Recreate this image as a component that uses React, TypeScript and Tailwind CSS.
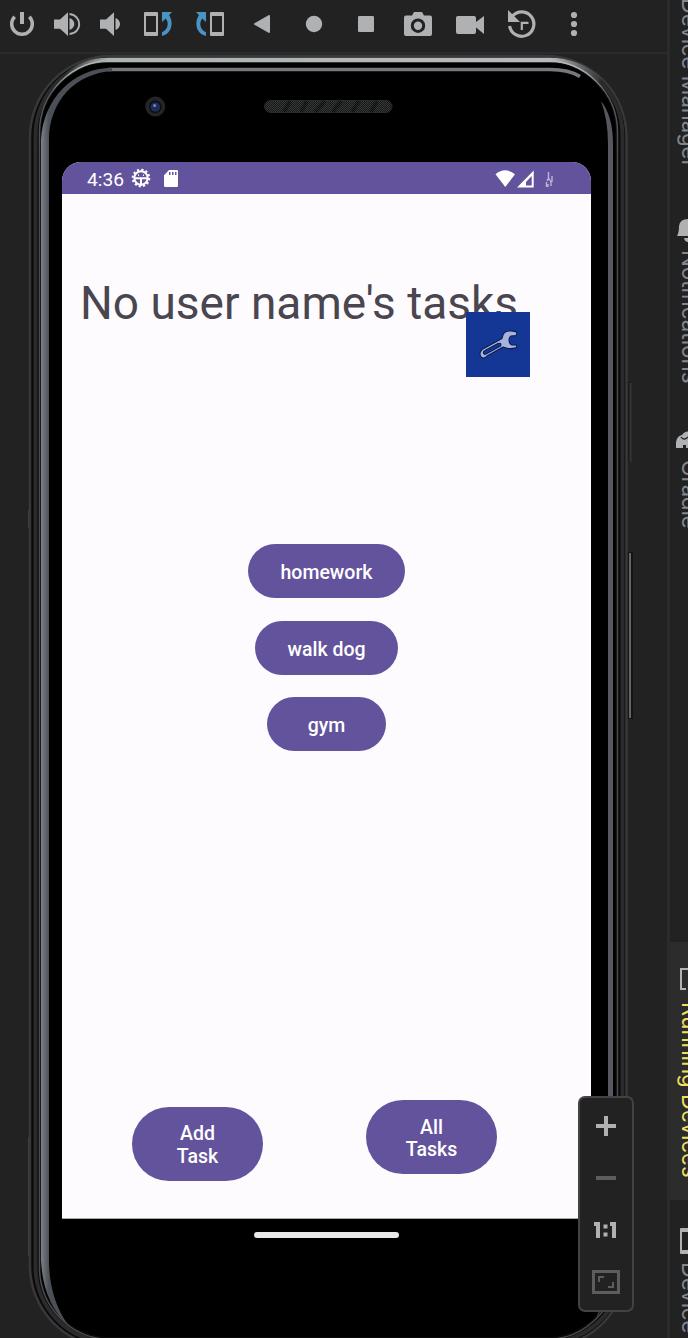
import type { ReactNode } from "react";

function ToolIcon({ label, wide, children }: { label: string; wide?: boolean; children: ReactNode }) {
  return (
    <button aria-label={label} className={wide ? "flex h-12 w-[52px] items-center justify-center" : "flex h-12 w-11 items-center justify-center"}>
      <svg width="32" height="32" viewBox="-16 -16 32 32" fill="#afb1b3">{children}</svg>
    </button>
  );
}

function RotateGlyph() {
  return (
    <>
      <path fillRule="evenodd" d="M-13-12H-1Q0-12 0-11V11Q0 12-1 12H-13Q-14 12-14 11V-11Q-14-12-13-12ZM-12-8V8H-2V-8Z" />
      <path d="M4-12H14L11-8.8C15-4 15.500 9 4 12V8.300C10.500 5 11-1 7.800-5.500L4-2Z" fill="#4a93c5" />
    </>
  );
}

function Toolbar() {
  return (
    <header className="flex h-[54px] shrink-0 border-b-2 border-[#2b2b2b]">
      <ToolIcon label="Power">
        <path d="M-7.300-8A10.300 10.300 0 1 0 7.300-8" transform="translate(0 .7)" fill="none" stroke="#afb1b3" strokeWidth="3.500" />
        <path d="M-2-12H2V0H-2Z" />
      </ToolIcon>
      <ToolIcon label="Volume up">
        <path d="M-12-4.500H-6L2-11.800V12L-6 4.700H-12ZM3.500-6C10-4 10 4 3.500 6Z" />
        <path d="M3.500-10C16.500-8.500 16.500 8.800 3.500 10" fill="none" stroke="#afb1b3" strokeWidth="1.900" />
      </ToolIcon>
      <ToolIcon label="Volume down">
        <path d="M-10-4.500H-4L4-11.800V12L-4 4.700H-10ZM5.500-6C11.500-3.800 11.500 3.800 5.500 6Z" />
      </ToolIcon>
      <ToolIcon wide label="Rotate left"><RotateGlyph /></ToolIcon>
      <ToolIcon wide label="Rotate right"><g transform="scale(-1 1)"><RotateGlyph /></g></ToolIcon>
      <ToolIcon wide label="Back"><path d="M-7.500-.8L6.500-8.800Q8-9.300 8-7.800V7.800Q8 9.300 6.500 8.800L-7.500.8Q-8.600 0-7.500-.8Z" /></ToolIcon>
      <ToolIcon wide label="Home"><circle r="8.200" /></ToolIcon>
      <ToolIcon wide label="Overview"><rect x="-8" y="-8" width="16" height="16" rx="1.200" /></ToolIcon>
      <ToolIcon wide label="Screenshot">
        <path d="M-12-8.500H-6L-4-12H4L6-8.500H12Q14-8.500 14-6.500V10Q14 12 12 12H-12Q-14 12-14 10V-6.500Q-14-8.500-12-8.500Z" />
        <circle cy="1.700" r="5.700" fill="none" stroke="#222222" strokeWidth="3" />
      </ToolIcon>
      <ToolIcon wide label="Record">
        <path d="M-12-8H4Q6-8 6-6V-2L14-8V10L6 3.500V8Q6 10 4 10H-12Q-14 10-14 8V-6Q-14-8-12-8Z" />
      </ToolIcon>
      <ToolIcon wide label="Snapshots">
        <path d="M-9.500-8A12.200 12.200 0 1 1-12.400 2" fill="none" stroke="#afb1b3" strokeWidth="3.200" />
        <path d="M-14-14V-2H-2Z" />
        <path d="M-.2 6V-1.200H6.500" fill="none" stroke="#afb1b3" strokeWidth="2.200" />
      </ToolIcon>
      <ToolIcon wide label="More"><circle cy="-9" r="3.100" /><circle r="3.100" /><circle cy="9" r="3.100" /></ToolIcon>
    </header>
  );
}

function DeviceFrame() {
  return (
    <svg className="absolute left-0 top-0" width="667" height="1284" viewBox="0 54 667 1284" fill="none">
      <defs>
        <linearGradient id="rim" x1="0" y1="55" x2="0" y2="150" gradientUnits="userSpaceOnUse">
          <stop offset="0" stopColor="#b9bdbe" />
          <stop offset=".18" stopColor="#a7abad" />
          <stop offset=".4" stopColor="#55585a" />
          <stop offset="1" stopColor="#4b4b4e" />
        </linearGradient>
        <linearGradient id="topRim" x1="65" y1="0" x2="605" y2="0" gradientUnits="userSpaceOnUse">
          <stop offset="0" stopColor="#aeb2b3" stopOpacity="0" />
          <stop offset=".08" stopColor="#aeb2b3" />
          <stop offset=".9" stopColor="#b8b9bc" />
          <stop offset="1" stopColor="#aeb2b3" stopOpacity="0" />
        </linearGradient>
        <linearGradient id="edge" x1="41" y1="0" x2="49" y2="0" gradientUnits="userSpaceOnUse">
          <stop offset="0" stopColor="#7c8187" />
          <stop offset="1" stopColor="#4b4f56" />
        </linearGradient>
        <pattern id="mesh" width="2" height="2" patternUnits="userSpaceOnUse">
          <path d="M0 0H1V1H0ZM1 1H2V2H1Z" fill="#373a39" />
        </pattern>
      </defs>
      <path d="M628 382H631V462H628Z" fill="#191919" />
      <path d="M630.500 383V462" stroke="#353535" strokeWidth="2" />
      <path d="M627 552H633V719H627Z" fill="#141414" />
      <path d="M630 553V718" stroke="#656565" strokeWidth="2" />
      <path d="M28.500 510V528M28.500 1137V1256" stroke="#3c4048" />
      <rect x="30" y="56" width="596.500" height="1291" rx="81" fill="#0a0a0a" stroke="#38383a" strokeWidth="2.500" />
      <rect x="35.500" y="59.500" width="587" height="1283" rx="76" stroke="#2b2b2b" strokeWidth="4" />
      <rect x="39.500" y="60.500" width="578" height="1279" rx="72" stroke="url(#rim)" strokeWidth="1.500" />
      <path d="M67 75Q83 60 108 60H550Q578 60 600 80" stroke="url(#topRim)" strokeWidth="4.500" />
      <rect x="41" y="63" width="574.500" height="1274" rx="69" fill="#000" />
      <path d="M108 69.500H550Q569 69.500 580 76.500" stroke="#77777e" strokeWidth="3.500" />
      <path d="M41 140C43 99 73 68 112 67.700V71.300C76 73 49 101 49 140V1260Q49 1298 68 1325Q43 1303 41 1260Z" fill="url(#edge)" />
      <path d="M601 101Q613 116 613 144V1260Q612 1296 596 1318Q608 1295 608 1260V144Q608 120 601 101Z" fill="#56575f" />
      <circle cx="155.300" cy="106.500" r="10" fill="#242527" />
      <circle cx="155.300" cy="106.800" r="6.300" fill="#0b0c15" />
      <circle cx="155.300" cy="107" r="4.800" fill="#202c58" />
      <circle cx="154.600" cy="105.500" r="1.600" fill="#7581ad" />
      <rect x="264.500" y="100.500" width="127.500" height="12" rx="6" fill="#151716" stroke="#292c2b" />
      <rect x="265" y="101" width="126" height="11" rx="5.500" fill="url(#mesh)" />
      <path d="M284 112L290 101M301 112L307 101M315 112L325 101M333 112L341 101M352 112L359 101M371 112L377 101" stroke="#0b0d0c" strokeOpacity=".5" strokeWidth="4" />
    </svg>
  );
}

function StatusBar() {
  return (
    <div className="flex h-8 items-center rounded-t-[19px] bg-[#63539c] text-white">
      <span className="ml-[25px] mt-[3px] w-[36px] whitespace-nowrap text-[19.200px] leading-none">4:36</span>
      <svg className="ml-[8px]" width="20" height="20" viewBox="-10 -10 20 20" fill="none" stroke="#fff">
        <circle r="6.700" strokeWidth="2" />
        <circle r="8.300" strokeWidth="2" strokeDasharray="2.200 2.146" />
        <path d="M-6.500.2H6.500M0 0V8" strokeWidth="2" />
        <path d="M-3-2.800H-2M2-2.800H3" strokeWidth="1.500" />
      </svg>
      <svg className="ml-[13px]" width="14" height="17" viewBox="0 0 14 17">
        <path fill="#fff" fillRule="evenodd" d="M5 0H12.800Q14 0 14 1.200V15.800Q14 17 12.800 17H1.200Q0 17 0 15.800V5.200ZM5 2V5H6.500V2ZM8 2V5H9.500V2ZM11 2V5H12.500V2Z" />
      </svg>
      <svg className="ml-auto mr-[36px] mt-px" width="60" height="18" viewBox="0 0 60 18" fill="#fff">
        <path d="M.500 4.200Q10-3.500 20 4.200L10.300 17Z" />
        <path fillRule="evenodd" d="M38.700.500V17.500H22ZM36.700 6V15.500H31V12Z" />
        <path d="M53.500 2V8L56 12V16M53.500 8L52 11M51.500 12V17M57 6V12M53 14V17" fill="none" stroke="#bcb3da" strokeWidth="1.400" />
      </svg>
    </div>
  );
}

const pill = "flex items-center justify-center rounded-full bg-[#63539c] text-center text-[19.500px] font-medium text-white";

function AppScreen() {
  return (
    <section className="relative ml-[62px] mt-[108px] flex h-[1057px] w-[529px] flex-col rounded-t-[19px] border-b border-[#aaa8ad] bg-[#fefbff] font-[Roboto,sans-serif]">
      <StatusBar />
      <div className="relative mt-[80px] h-[58px]">
        <h1 className="ml-[18px] whitespace-nowrap text-[46px] leading-[58px] text-[#49464f]">No user name&apos;s tasks</h1>
        <button aria-label="Settings" className="absolute left-[404px] top-[38px] h-[65px] w-[64px] bg-[#143694]">
          <svg width="64" height="65" viewBox="0 0 64 65">
            <path fillRule="evenodd" d="M16 37.500L36 26.500Q37 19 43 19Q51 18.500 51 21.500L50 23.500L45 24Q43 25 43 28Q43 32 46 33H50L51 35Q49 37 42 36.500L37 35L21 44Q18 47.500 15 45Q12.500 41 16 37.500ZM17.500 41Q18 43 20 42L34.500 34Q36 30.500 32 31.500L19 38.500Q17 39.500 17.500 41Z" fill="#a6b3da" stroke="#0b1e52" strokeWidth="1.100" strokeLinejoin="round" />
          </svg>
        </button>
      </div>
      <div className="mt-[212px] flex flex-col items-center">
        <button className={`${pill} h-[54px] w-[157px] pt-[3px]`}>homework</button>
        <button className={`${pill} mt-[23px] h-[54px] w-[143px] pt-[3px]`}>walk dog</button>
        <button className={`${pill} mt-[22px] h-[54px] w-[119px] pt-[3px]`}>gym</button>
      </div>
      <div className="mt-[349px] flex items-start justify-between pl-[70px] pr-[94px]">
        <button className={`${pill} mt-[7px] h-[74px] w-[131px] pt-[3px] leading-[22.500px]`}>Add<br />Task</button>
        <button className={`${pill} h-[74px] w-[131px] pt-[4px] leading-[22.500px]`}>All<br />Tasks</button>
      </div>
    </section>
  );
}

function ZoomPanel() {
  return (
    <aside className="absolute left-[578px] top-[1096px] flex h-[216px] w-14 flex-col items-center rounded-[7px] border-2 border-[#434343] bg-[#222222] pt-0.5">
      <button aria-label="Zoom in" className="flex h-[52px] items-center">
        <svg width="20" height="20"><path d="M8 0H12V8H20V12H12V20H8V12H0V8H8Z" fill="#afb1b3" /></svg>
      </button>
      <button aria-label="Zoom out" className="flex h-[52px] items-center">
        <svg width="20" height="4"><path d="M0 0H20V4H0Z" fill="#5c5d5e" /></svg>
      </button>
      <button aria-label="Actual size" className="flex h-[52px] items-center">
        <svg width="24" height="16" fill="#afb1b3"><path d="M0 0H6V16H2V4H0ZM16 0H22V16H18V4H16ZM9.500 2.500H13.500V6.500H9.500ZM9.500 10.500H13.500V14.500H9.500Z" /></svg>
      </button>
      <button aria-label="Fit to window" className="flex h-[52px] items-center">
        <svg width="28" height="24" fill="none" stroke="#5c5d5e"><path d="M1.500 1.500H26.500V22.500H1.500Z" strokeWidth="3" /><path d="M7 12V7H12M21 12V17H16" strokeWidth="2" /></svg>
      </button>
    </aside>
  );
}

const sideLabel = "block w-7 whitespace-nowrap leading-[28px] [writing-mode:vertical-rl]";

function SideStripe() {
  return (
    <nav className="relative flex h-full w-[21px] shrink-0 flex-col overflow-hidden border-l-[3px] border-[#2b2b2b] font-[Inter,sans-serif] text-[22px] text-[#85868b]">
      <div className="h-[216px] pl-1.5"><span className={`${sideLabel} -mt-0.5`}>Device Manager</span></div>
      <div className="h-[214px] pl-1.5">
        <svg width="24" height="34" viewBox="0 0 24 34" fill="#afb1b3"><path d="M1 20Q3 17 3 10Q4 3 12 3Q20 3 21 10Q21 17 23 20ZM8 22H16Q15 26 12 26Q9 26 8 22Z" /></svg>
        <span className={`${sideLabel} text-[22.400px]`}>Notifications</span>
      </div>
      <div className="h-[512px] pl-1.5">
        <svg className="-ml-px" width="24" height="30" viewBox="0 0 24 30" fill="none"><path d="M1 18V12Q2 6 7 5Q10 0 17 2L23 8V18H18V15H15V18H11V15H8V18Z" fill="#afb1b3" /><path d="M6 7Q9 12 15 5" stroke="#222" strokeWidth="1.300" /></svg>
        <span className={sideLabel}>Gradle</span>
      </div>
      <div className="h-[258px] bg-[#2c2c2c] pl-1.5 text-[#f2df62]">
        <svg className="ml-[4px]" width="24" height="60" viewBox="0 0 24 60" fill="none"><path d="M6 47H1V27H24" stroke="#afb1b3" strokeWidth="2" /></svg>
        <span className={`${sideLabel} text-[22.200px]`}>Running Devices</span>
      </div>
      <div className="h-[138px] overflow-hidden pl-1.5">
        <svg className="ml-[4px]" width="24" height="62" viewBox="0 0 24 62"><path fillRule="evenodd" d="M1 28H24V54H1Q0 54 0 53V29Q0 28 1 28ZM2 32V50H24V32Z" fill="#afb1b3" /></svg>
        <span className={sideLabel}>Device Explorer</span>
      </div>
    </nav>
  );
}

export default function App() {
  return (
    <div className="relative flex h-[1338px] w-[688px] overflow-hidden bg-[#222222]">
      <div className="flex h-full w-[667px] shrink-0 flex-col">
        <Toolbar />
        <main className="relative flex flex-1 flex-col">
          <DeviceFrame />
          <AppScreen />
          <div className="relative ml-[254px] mt-[13px] h-[6px] w-[145px] rounded-full bg-[#e9e9e9]" />
        </main>
      </div>
      <SideStripe />
      <ZoomPanel />
    </div>
  );
}
